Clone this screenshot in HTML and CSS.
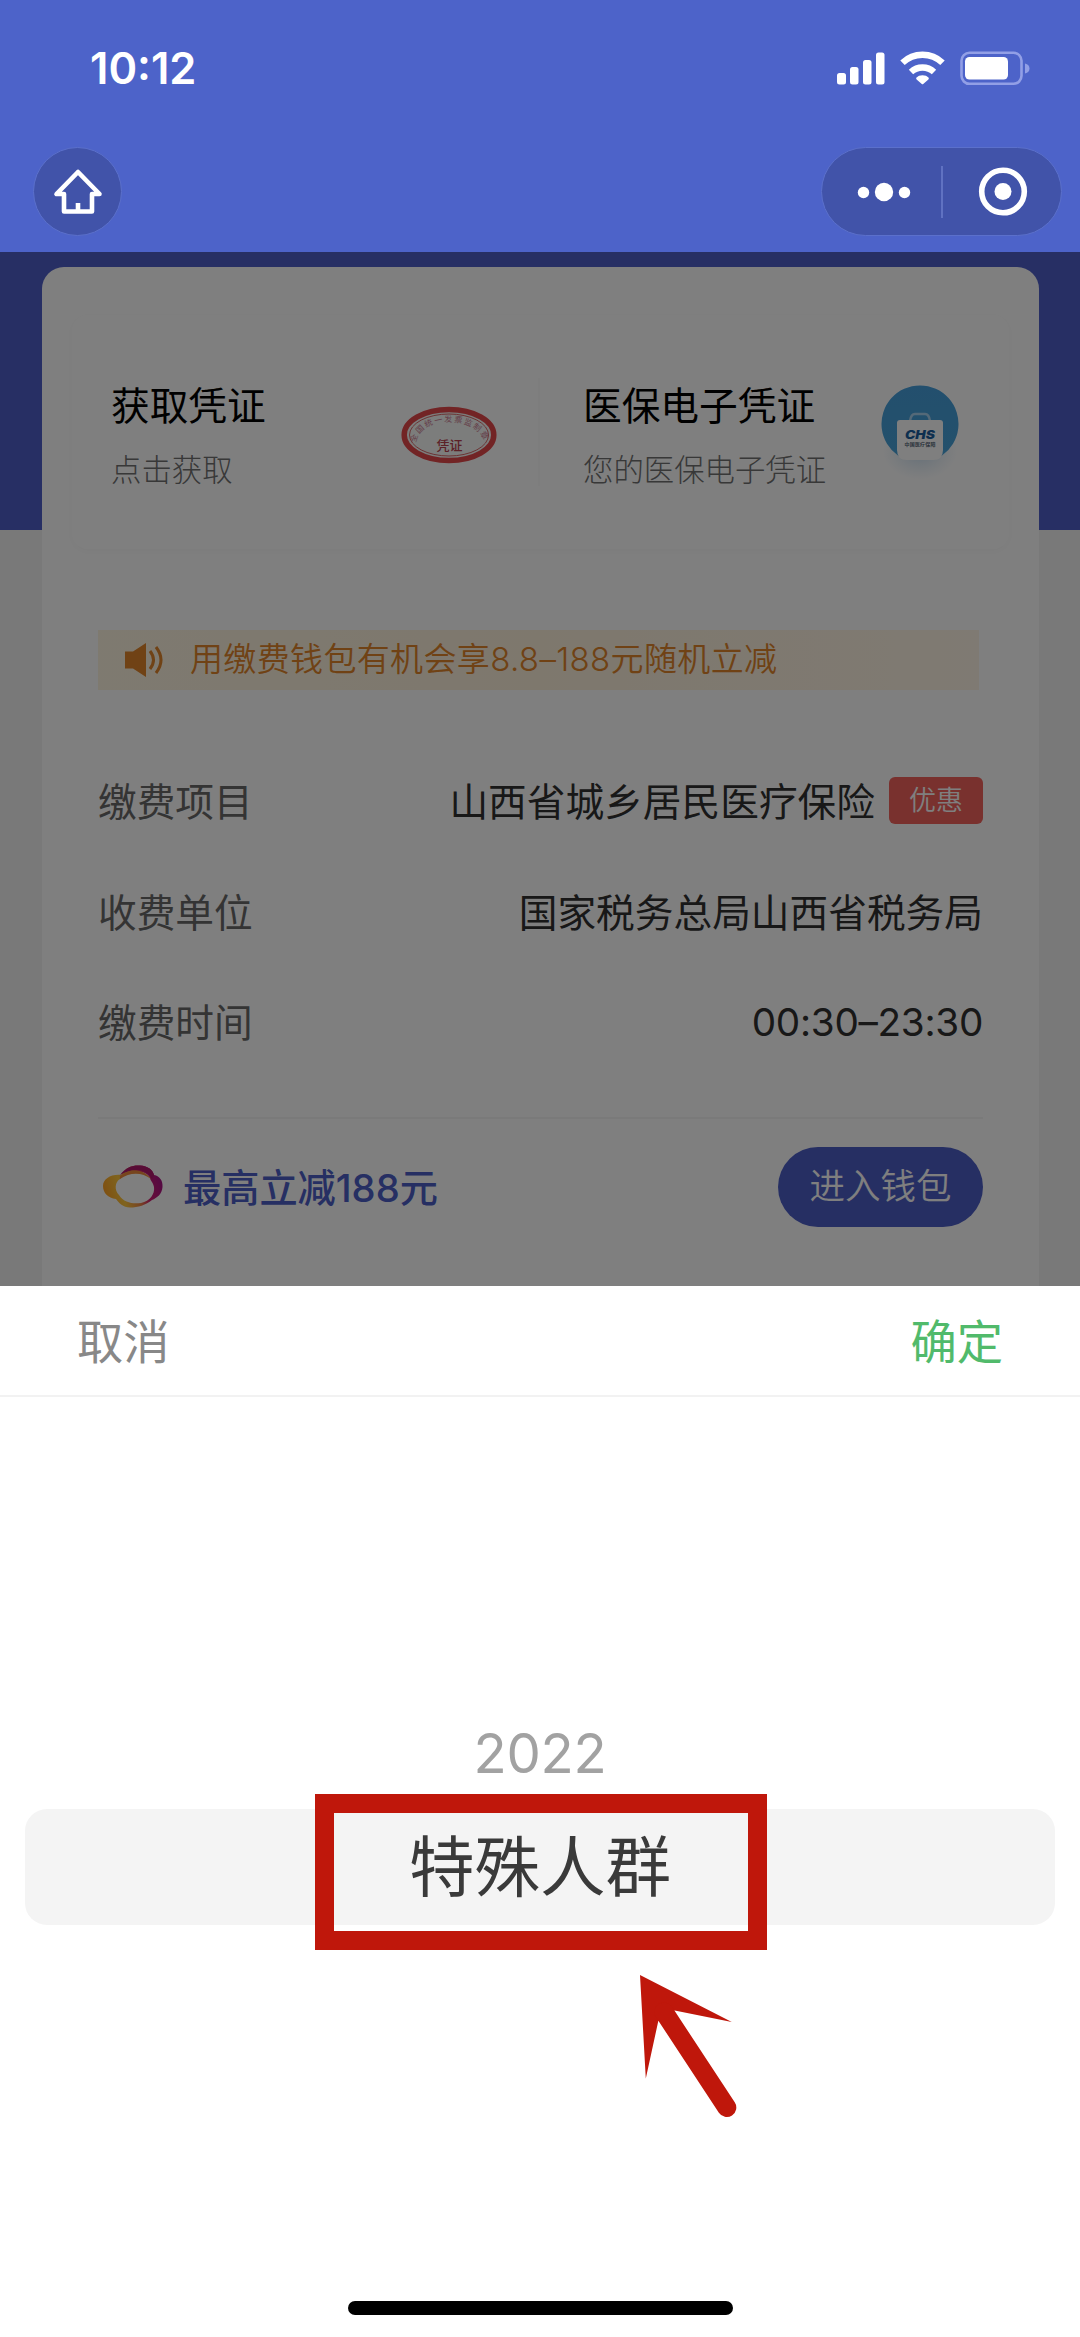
FILE: index.html
```html
<!DOCTYPE html>
<html lang="zh-CN">
<head>
<meta charset="utf-8">
<title>缴费</title>
<link rel="stylesheet" href="styles.css">
</head>
<body>
<div class="phone">
  <header class="top">
    <div class="status">
      <span class="clock">10:12</span>
      <svg class="status-icons" width="194" height="36" viewBox="0 0 194 36">
        <g fill="#fff">
          <rect x="1" y="23" width="9" height="11.500" rx="2.500"/><rect x="14" y="17" width="8.500" height="17.500" rx="2.500"/><rect x="27" y="10" width="8.500" height="24.500" rx="2.500"/><rect x="40" y="2.500" width="8.500" height="32" rx="2.500"/>
          <path d="M86.500 25.300q4 0 6 2.300.8 1-.1 2l-5.200 4.300q-.7.600-1.400 0l-5.200-4.300q-.9-1-.1-2 2-2.300 6-2.300z"/>
          <rect x="129" y="7" width="43" height="22.500" rx="4.500"/>
        </g>
        <g fill="none" stroke="#fff" stroke-width="6.400"><path d="M66.500 12.700a29 29 0 0 1 40 0"/><path d="M75 22a17 17 0 0 1 23 0"/></g>
        <rect x="125.500" y="2.800" width="60" height="31" rx="8" fill="none" stroke="#929fe6" stroke-width="2.600"/>
        <path d="M189 13.500q4.500 1 4.500 5t-4.500 5z" fill="#929fe6"/>
      </svg>
    </div>
    <nav class="nav">
      <span class="home">
        <svg width="50" height="48" viewBox="0 0 50 48" fill="none" stroke="#fff" stroke-width="4.600" stroke-linejoin="round"><path d="M25 4 3.500 26H11v17.500h28V26h7.500z"/><path d="M25 35v8"/></svg>
      </span>
      <span class="capsule">
        <svg width="119" height="60" viewBox="0 0 119 60" fill="#fff"><circle cx="41.500" cy="30.500" r="5.700"/><circle cx="62" cy="30" r="9.200"/><circle cx="82.500" cy="30.500" r="5.700"/></svg>
        <span class="split"></span>
        <svg width="118" height="60" viewBox="0 0 118 60"><circle cx="60" cy="29.500" r="21.300" fill="none" stroke="#fff" stroke-width="5.600"/><circle cx="60" cy="29.500" r="8.500" fill="#fff"/></svg>
      </span>
    </nav>
  </header>

  <main class="page">
    <section class="card">
      <div class="entries">
        <div class="entry">
          <div class="entry-text"><h2>获取凭证</h2><p>点击获取</p></div>
          <svg class="stamp" width="96" height="58" viewBox="0 0 96 58">
            <ellipse cx="48" cy="29" rx="44.800" ry="25.500" fill="#f8faf8" stroke="#e5484a" stroke-width="5.500"/>
            <ellipse cx="48" cy="29" rx="39.500" ry="21" fill="none" stroke="#d86868" stroke-width="1"/>
            <path id="arc" d="M15 37C18 9 78 9 83 37" fill="none"/>
            <text class="stamp-arc" textLength="84"><textPath href="#arc" textLength="84">全国统一发票监制章</textPath></text>
            <text class="stamp-name" x="48.500" y="43.500" text-anchor="middle">凭证</text>
          </svg>
        </div>
        <div class="entry second">
          <div class="entry-text"><h2>医保电子凭证</h2><p>您的医保电子凭证</p></div>
          <svg class="chs" width="100" height="110" viewBox="0 0 100 110">
            <defs><linearGradient id="sky" x2="0" y2="1"><stop stop-color="#469fdc"/><stop offset="1" stop-color="#48a2d8"/></linearGradient>
            <radialGradient id="glow"><stop stop-color="#a8cbe8" stop-opacity=".65"/><stop offset="1" stop-color="#c4d9ec" stop-opacity="0"/></radialGradient></defs>
            <ellipse cx="50" cy="76" rx="38" ry="29" fill="url(#glow)"/>
            <path d="M28 80.500A38.500 38.500 0 1 1 72 80.500Z" fill="url(#sky)"/>
            <path d="M40 46q1-7 5-7h10q4 0 5 7" fill="none" stroke="#a9d3f0" stroke-width="2.500"/>
            <path d="M30 45h40q3 0 3 3v27q0 10-10 10H37q-10 0-10-10V48q0-3 3-3z" fill="#fff"/>
            <text class="chs-mark" x="50" y="64" text-anchor="middle" textLength="30" lengthAdjust="spacingAndGlyphs">CHS</text>
            <text class="chs-name" x="50" y="71" text-anchor="middle" textLength="31">中国医疗保障</text>
          </svg>
        </div>
      </div>

      <div class="notice">
        <svg width="40" height="36" viewBox="0 0 40 36"><path d="M1 9.500h8L22 1v34L9 26.500H1z" fill="#e0842a"/><path d="M26 9q7 9 0 18M32 5q10 13 0 26" fill="none" stroke="#e0842a" stroke-width="3"/></svg>
        <span class="notice-text">用缴费钱包有机会享8.8–188元随机立减</span>
      </div>

      <dl class="details">
        <div class="row"><dt>缴费项目</dt><dd>山西省城乡居民医疗保险<span class="tag">优惠</span></dd></div>
        <div class="row"><dt>收费单位</dt><dd>国家税务总局山西省税务局</dd></div>
        <div class="row"><dt>缴费时间</dt><dd class="hours">00:30–23:30</dd></div>
      </dl>

      <div class="wallet">
        <svg width="62" height="46" viewBox="0 0 62 46">
          <defs><linearGradient id="ring" x1="0" y1=".6" x2="1" y2=".4"><stop stop-color="#ff9f24"/><stop offset=".3" stop-color="#ffc83c"/><stop offset=".55" stop-color="#ef8446"/><stop offset=".72" stop-color="#cf1b72"/><stop offset="1" stop-color="#a71386"/></linearGradient></defs>
          <path fill-rule="evenodd" fill="url(#ring)" d="M19 11C24 3 31 1 38 1.500 46 2 51 6 52 11 58 12 61 17 60.500 23 60 30 55 34 50 36 44 41 36 43.500 28 43.500 21 43.500 17 39 14 35 6 34 1 29 1 22 1 15 9 10 19 11ZM18 15C13 18 12 26 17 31 22 39 31 40 39 39 48 37 53 30 52 23 51 18 48 16 48 14 45 8 38 7 32 9 26 8 22 11 18 15Z"/>
          <path d="M18 11C24 3 31 1 38 1.500 46 2 51 6 52 11L50 15C45 5 32 3 18 11Z" fill="#b0186c"/>
          <path d="M18 12C30 3 43 6 49 15 40 8 28 8 18 15Z" fill="#ee8a3c"/>
        </svg>
        <strong>最高立减188元</strong>
        <span class="enter">进入钱包</span>
      </div>
    </section>
    <div class="mask"></div>
  </main>

  <section class="sheet">
    <div class="sheet-bar"><span class="cancel">取消</span><span class="confirm">确定</span></div>
    <div class="picker">
      <div class="year">2022</div>
      <div class="chosen">特殊人群<span class="frame"></span>
        <svg class="arrow" width="98" height="148" viewBox="0 0 98 148"><path d="M1 1 92.800 48 35.700 36.500 19.300 47 6.800 104.500Z" fill="#bf170b"/><path d="M25 38 87.800 133.500" stroke="#bf170b" stroke-width="19" stroke-linecap="round"/></svg>
      </div>
    </div>
    <div class="home-bar"></div>
  </section>
</div>
</body>
</html>
```
FILE: styles.css
```css
* { box-sizing: border-box; }
body { margin: 0; font-family: Inter, "Noto Sans CJK SC", sans-serif; background: #fff; }
svg { display: block; flex: none; }
h2, p, dl, dt, dd { margin: 0; font-weight: 400; }
.phone { width: 1080px; height: 2337px; display: flex; flex-direction: column; overflow: hidden; }

.top { height: 252px; background: #4d63c9; flex: none; }
.status { height: 147px; padding: 50px 50px 0 90px; display: flex; justify-content: space-between; align-items: flex-start; }
.clock { font-size: 43.500px; line-height: 37px; font-weight: 600; color: #fff; }
.nav { padding: 0 18px 0 33px; display: flex; justify-content: space-between; }
.home, .capsule { height: 89px; border: 1px solid #5b70cb; background: #4153a9; border-radius: 45px; display: flex; align-items: center; justify-content: center; }
.home { width: 89px; }
.capsule { width: 241px; }
.split { width: 2px; height: 52px; flex: none; background: #6072c2; }

.page { position: relative; height: 1034px; flex: none; padding: 15px 41px 0 42px; background: linear-gradient(#4e5fc8 278px, #f2f2f2 278px); overflow: hidden; }
.mask { position: absolute; inset: 0; background: rgba(0, 0, 0, .5); }
.card { height: 1030px; background: #fff; border-radius: 22px 22px 0 0; padding: 48px 30px 0; }
.entries { height: 234px; display: grid; grid-template-columns: 466px 1fr; border-radius: 16px; box-shadow: 0 2px 10px rgba(0, 0, 0, .03); }
.entry { display: flex; justify-content: space-between; padding: 66px 41px 0 39px; }
.entry.second { padding: 66px 39px 0 43px; border-image: linear-gradient(transparent 27%, #fafafa 27% 73%, transparent 73%) 1; border-left: 2px solid; }
.entry-text { white-space: nowrap; }
.entry-text h2 { font-size: 38.700px; line-height: 50px; color: #000; }
.entry-text p { margin-top: 19px; font-size: 30.400px; line-height: 40px; font-weight: 300; color: #707070; }
.stamp { margin-top: 25px; }
.stamp-arc { font-size: 8px; fill: #ca7b91; }
.stamp-name { font-size: 13px; font-weight: 500; fill: #b8424f; }
.chs { margin-top: -6px; }
.chs-mark { font: italic 900 12px Inter, sans-serif; fill: #1d5f9f; }
.chs-name { font-size: 5px; font-weight: 700; fill: #567; }

.notice { margin: 81px 30px 0 26px; height: 60px; padding-left: 26px; display: flex; align-items: center; gap: 26px; background: linear-gradient(90deg, #fff9e8 -60%, #fcf0db 50%, #fff5e6); }
.notice-text { font-size: 33px; line-height: 56px; margin-top: -2px; font-weight: 350; color: #e0842a; letter-spacing: .35px; white-space: nowrap; }
.details { margin: 54px 26px 0; }
.row { height: 110.500px; display: flex; justify-content: space-between; align-items: center; font-size: 38.700px; white-space: nowrap; }
.row dt { color: #686868; }
.row dd { display: flex; align-items: center; color: #303030; }
.tag { width: 94px; height: 47px; margin: 2px 0 0 14px; line-height: 47px; text-align: center; border-radius: 6px; background: #f2625c; color: #fff; font-size: 27px; font-weight: 350; }
.hours { letter-spacing: -.3px; padding-top: 3px; }
.wallet { margin: 41px 26px 0; height: 139px; border-top: 2px solid #f5f5f5; padding-left: 4px; display: flex; align-items: center; }
.wallet strong { margin: -4px 0 0 19px; font-size: 38.200px; font-weight: 500; color: #4d5ec6; flex: 1; }
.enter { width: 205px; height: 80px; border-radius: 40px; background: #4d5ec6; color: #fff; font-size: 35.500px; line-height: 79px; text-align: center; font-weight: 350; }

.sheet { flex: 1; background: #fff; display: flex; flex-direction: column; align-items: center; }
.sheet-bar { width: 100%; height: 111px; padding: 0 77px; border-bottom: 2px solid #f2f2f2; display: flex; justify-content: space-between; font-size: 46.300px; line-height: 112px; }
.cancel { color: #888; }
.confirm { color: #51ba6b; }
.picker { width: 1030px; padding-top: 321px; flex: none; }
.year { height: 91px; text-align: center; font-size: 54.500px; line-height: 71px; color: #a2a2a2; letter-spacing: -.3px; }
.chosen { position: relative; height: 116px; border-radius: 22px; background: #f4f4f4; text-align: center; font-size: 65.500px; line-height: 118px; color: #3a3a3a; }
.frame { position: absolute; left: 290px; top: -15px; width: 452px; height: 156px; border: 19.500px solid #bf170b; }
.arrow { position: absolute; left: 614px; top: 165px; }
.home-bar { width: 385px; height: 14px; border-radius: 7px; background: #000; margin-top: 376px; }
```
